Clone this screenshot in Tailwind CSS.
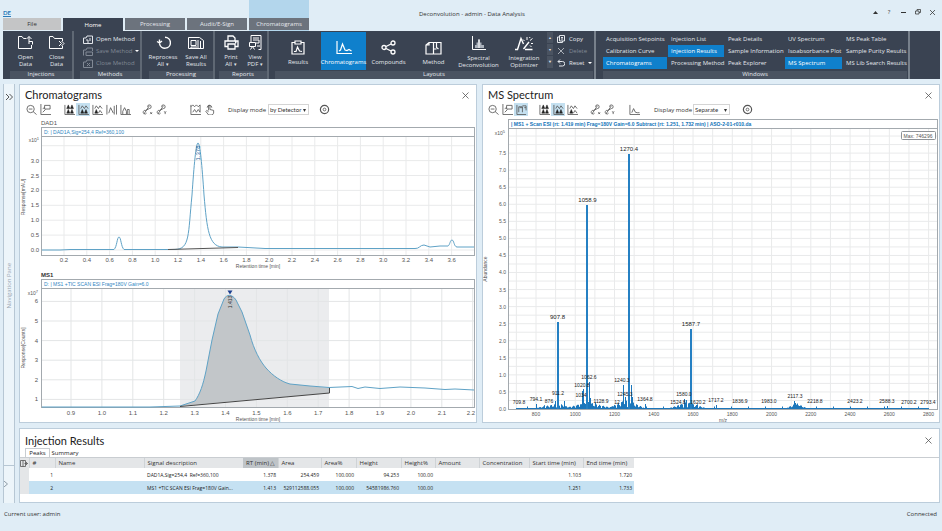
<!DOCTYPE html>
<html lang="en">
<head>
    <meta charset="UTF-8">
    <title>Deconvolution - admin - Data Analysis</title>
    <script src="https://cdn.jsdelivr.net/npm/@tailwindcss/browser@4"></script>
</head>
<body class="min-h-screen flex flex-col bg-[#e0edf6] text-[6px] leading-[6px] text-[#333] font-['Open_Sans',sans-serif]">

<header class="pl-[3px] pr-[2px]">
    <div class="flex h-[31px] items-stretch">
        <div class="flex flex-col justify-end">
            <div class="w-[8px] mb-[1px] border-b border-[#2a7ab8] text-[6px] leading-[6px] font-bold text-[#2a7ab8] font-['Lato',sans-serif]">DE</div>
            <nav class="flex gap-[2px] h-[13px] text-[#e6e9ee]">
                <a href="#" class="w-[58px] h-[12px] flex items-center justify-center bg-[#c4c5c6] text-[#333]">File</a>
                <a href="#" class="w-[60px] flex items-center justify-center bg-[#3a4352] text-white">Home</a>
                <a href="#" class="w-[60px] h-[12px] flex items-center justify-center bg-[#6c737d]">Processing</a>
                <a href="#" class="w-[60px] h-[12px] flex items-center justify-center bg-[#6c737d]">Audit/E-Sign</a>
            </nav>
        </div>
        <div class="ml-[2px] w-[60px] bg-[#b3d6ec] flex flex-col justify-end">
            <a href="#" class="h-[12px] mb-[1px] flex items-center justify-center bg-[#6c737d] text-[#e6e9ee]">Chromatograms</a>
        </div>
        <h1 class="flex-1 pl-[110px] pt-[11px] text-[6px] leading-[6px]">Deconvolution - admin - Data Analysis</h1>
        <div class="flex pt-[6px] pr-[1px] text-[#333]">
            <button class="w-[14px] h-[12px] flex items-center justify-center" aria-label="Collapse ribbon"><svg class="w-[5px] h-[3px]" viewBox="0 0 5 3"><path d="M0 3L2.5 0L5 3z" fill="#333"/></svg></button>
            <button class="w-[14px] h-[12px] flex items-center justify-center" aria-label="Help">?</button>
            <button class="w-[14px] h-[12px] flex items-center justify-center" aria-label="Minimize"><svg class="w-[5px] h-[5px]" viewBox="0 0 5 5" stroke="#333"><path d="M0 2.5h5"/></svg></button>
            <button class="w-[15px] h-[12px] flex items-center justify-center" aria-label="Restore"><svg class="w-[6px] h-[6px]" viewBox="0 0 12 12" fill="none" stroke="#333" stroke-width="1.5"><path d="M1 4h7v6H1zM4 4V1h7v6H8"/></svg></button>
            <button class="w-[14px] h-[12px] flex items-center justify-center" aria-label="Close"><svg class="w-[5px] h-[5px]" viewBox="0 0 10 10" stroke="#333" stroke-width="1.5"><path d="M0 0l10 10M10 0L0 10"/></svg></button>
        </div>
    </div>

    <div class="flex h-[48px] bg-[#3a4352] text-[#e3e7ec]">
        <section class="w-[71px] shrink-0 flex flex-col border-r-2 border-[#5f6874]">
            <div class="flex-1 flex justify-center pl-[7px]">
                <button class="w-[31px] flex flex-col items-center pt-[4px] gap-[4px] leading-[7px]">
                    <svg class="w-[17px] h-[15px]" viewBox="0 0 17 15" fill="none" stroke="#fff"><path d="M9 3.5H6.5L5 1.5H1.5v12h13V10M12 9V1.5M9.5 4L12 1.5 14.5 4M12 6.5h3.5v3"/></svg>
                    <span>Open<br>Data</span>
                </button>
                <button class="w-[31px] flex flex-col items-center pt-[4px] gap-[4px] leading-[7px]">
                    <svg class="w-[17px] h-[15px]" viewBox="0 0 17 15" fill="none" stroke="#fff"><path d="M14.5 6V3.5H6.5L5 1.5H1.5v12h13V11M11 6l2.5 2.5L11 11M13.5 6L16 8.5 13.5 11"/></svg>
                    <span>Close<br>Data</span>
                </button>
            </div>
            <h2 class="ml-[7px] h-[8px] pb-[1px] bg-[#4a5361] text-center leading-[7px]">Injections</h2>
        </section>
        <section class="w-[68px] shrink-0 flex flex-col border-r-2 border-[#5f6874] whitespace-nowrap">
            <div class="flex-1 flex flex-col pl-[9px] pt-[2px]">
                <button class="h-[12px] flex items-center gap-[3px]"><svg class="w-[10px] h-[9px]" viewBox="0 0 10 9" fill="none" stroke="#e3e7ec"><path d="M.5 8.5V3H3l1-2h5.5v7.5zM3 5h2v3M7 3v3"/></svg>Open Method</button>
                <button class="h-[12px] flex items-center gap-[3px] text-[#818995]"><svg class="w-[10px] h-[9px]" viewBox="0 0 10 9" fill="none" stroke="#818995"><path d="M.5 8.5V3H3l1-2h5.5v3M3 5h6.5v3.5H3z"/></svg>Save Method<svg class="w-[4px] h-[2px]" viewBox="0 0 4 2"><path d="M0 0h4L2 2z" fill="#fff"/></svg></button>
                <button class="h-[12px] flex items-center gap-[3px] text-[#818995]"><svg class="w-[10px] h-[9px]" viewBox="0 0 10 9" fill="none" stroke="#818995"><path d="M.5 8.5V3H3l1-2h5.5v7.5zM4 4l3 3M7 4L4 7"/></svg>Close Method</button>
            </div>
            <h2 class="ml-[6px] h-[8px] pb-[1px] bg-[#4a5361] text-center leading-[7px]">Methods</h2>
        </section>
        <section class="w-[73px] shrink-0 flex flex-col border-r-2 border-[#5f6874]">
            <div class="flex-1 flex justify-center pl-[4px]">
                <button class="w-[33px] flex flex-col items-center pt-[4px] gap-[4px] leading-[7px]">
                    <svg class="w-[15px] h-[15px]" viewBox="0 0 15 15" fill="none" stroke="#fff" stroke-width="1.4"><path d="M3.5 4.5V8M3.5 8L1 6.5M3.5 8L6 6M9 2.2a5.5 5.5 0 1 1-5.5 6.5"/></svg>
                    <span>Reprocess<br>All <span class="text-[5px]">▾</span></span>
                </button>
                <button class="w-[33px] flex flex-col items-center pt-[4px] gap-[4px] leading-[7px]">
                    <svg class="w-[16px] h-[15px]" viewBox="0 0 16 15" fill="none" stroke="#fff"><path d="M.5 2.5h11l4 3v8h-15zM3 5.5h5v5H3zM10 5v6M12.5 6v7M3 13v-1h8"/></svg>
                    <span>Save All<br>Results</span>
                </button>
            </div>
            <h2 class="ml-[7px] h-[8px] pb-[1px] bg-[#4a5361] text-center leading-[7px]">Processing</h2>
        </section>
        <section class="w-[54px] shrink-0 flex flex-col border-r-2 border-[#5f6874]">
            <div class="flex-1 flex justify-center pl-[4px]">
                <button class="w-[24px] flex flex-col items-center pt-[4px] gap-[4px] leading-[7px]">
                    <svg class="w-[15px] h-[15px]" viewBox="0 0 15 15" fill="none" stroke="#fff" stroke-width="1.3"><path d="M4 6V1h5l2 2v3M3.5 11.5H1V6h13v5.5h-2.5M4 9h7v5H4zM11 7.5h1.5"/></svg>
                    <span>Print<br>All <span class="text-[5px]">▾</span></span>
                </button>
                <button class="w-[24px] flex flex-col items-center pt-[4px] gap-[4px] leading-[7px]">
                    <svg class="w-[13px] h-[15px]" viewBox="0 0 13 15" fill="none" stroke="#fff"><path d="M2 7V.5h10v14H9.5M4 3h6M4 5h6v3H7M.5 7.5h6v4h-6zM1.5 14.5l2-3 2 3M8 11h3"/></svg>
                    <span>View<br>PDF <span class="text-[5px]">▾</span></span>
                </button>
            </div>
            <h2 class="ml-[4px] h-[8px] pb-[1px] bg-[#4a5361] text-center leading-[7px]">Reports</h2>
        </section>
        <section class="w-[327px] shrink-0 flex flex-col border-r-2 border-[#77808b]">
            <div class="flex-1 flex pl-[6px] pt-[1px]">
                <button class="w-[46px] shrink-0 h-[38px] flex flex-col items-center pt-[8px] gap-[4px]">
                    <svg class="w-[14px] h-[15px]" viewBox="0 0 14 15" fill="none" stroke="#fff" stroke-width="1.2"><path d="M4 2.5H1v11.5h12V2.5h-3M4 1h6v3H4zM3 11.5h2L6.5 7 8.5 11l2.5.5"/></svg>
                    <span>Results</span>
                </button>
                <button class="w-[45px] shrink-0 h-[38px] flex flex-col items-center pt-[8px] gap-[4px] bg-[#0f80cc] text-white">
                    <svg class="w-[16px] h-[15px]" viewBox="0 0 16 15" fill="none" stroke="#fff" stroke-width="1.2"><path d="M1 1v12.5h15M3 11l1.5-1L6.5 4 9 10l2 .5 2-1 2.5 1.5"/></svg>
                    <span>Chromatograms</span>
                </button>
                <button class="w-[45px] shrink-0 h-[38px] flex flex-col items-center pt-[8px] gap-[4px]">
                    <svg class="w-[15px] h-[15px]" viewBox="0 0 15 15" fill="none" stroke="#fff" stroke-width="1.3"><circle cx="3" cy="7.5" r="2"/><circle cx="12" cy="3" r="2"/><circle cx="12" cy="12" r="2"/><path d="M5 6.5L10 4M5 8.5L10 11"/></svg>
                    <span>Compounds</span>
                </button>
                <button class="w-[45px] shrink-0 h-[38px] flex flex-col items-center pt-[8px] gap-[4px]">
                    <svg class="w-[17px] h-[15px]" viewBox="0 0 17 15" fill="none" stroke="#fff" stroke-width="1.2"><path d="M8.5 14H1V5l3-2.5h4.5zM4 2.5V5H1M8.5 2.5H16V14H8.5zM11.5 2.5v5l2 1.5M8.5 9h3"/></svg>
                    <span>Method</span>
                </button>
                <button class="w-[45px] shrink-0 h-[38px] flex flex-col items-center pt-[4px] gap-[4px] leading-[7px]">
                    <svg class="w-[15px] h-[15px]" viewBox="0 0 15 15" fill="none" stroke="#fff"><path d="M1.5 0v13.5H15"/><path d="M4 12V9h1.5V6.5H7V4h2v2.5h1.5V9H13v3z" fill="#aab1bb" stroke="none"/><path d="M8 3v9"/></svg>
                    <span>Spectral<br>Deconvolution</span>
                </button>
                <button class="w-[46px] shrink-0 h-[38px] flex flex-col items-center pt-[4px] gap-[4px] leading-[7px]">
                    <svg class="w-[18px] h-[15px]" viewBox="0 0 18 15" fill="none" stroke="#fff"><path d="M0 13.5h2.5L6 2.5 8.5 8M10 13.5h7.5M8.5 13L14 6" stroke-width="1.4"/><path d="M15 4.5l2.5-2M12 4V1M9.5 5L8 3.5M16 7.5h2M15 9.5l1.5 1.5M14.5 2l.5-1"/></svg>
                    <span>Integration<br>Optimizer</span>
                </button>
                <div class="w-[6px] flex flex-col gap-[1px] text-[4px]">
                    <button class="h-[11px] bg-[#4a5361]">▴</button>
                    <button class="h-[11px] bg-[#4a5361]">▾</button>
                    <button class="h-[12px] bg-[#4a5361]">▼</button>
                </div>
                <div class="flex flex-col pl-[4px] pt-[1px]">
                    <button class="h-[12px] flex items-center gap-[4px]"><svg class="w-[8px] h-[8px]" viewBox="0 0 8 8" fill="none" stroke="#e3e7ec"><path d="M2.5.5h5v5.5h-5zM2.5 2h-2v5.5h5V6M4 2.5h2M4 4h2"/></svg>Copy</button>
                    <button class="h-[12px] flex items-center gap-[4px] text-[#818995]"><svg class="w-[8px] h-[8px]" viewBox="0 0 8 8" stroke="#aab0b8"><path d="M1 1l6 6M7 1L1 7"/></svg>Delete</button>
                    <button class="h-[12px] flex items-center gap-[4px]"><svg class="w-[8px] h-[8px]" viewBox="0 0 8 8" fill="none" stroke="#e3e7ec"><path d="M3 .5L1 2.5l2 2M1 2.5h4.5a2 2 0 0 1 0 4.5H2"/></svg>Reset<svg class="w-[4px] h-[2px]" viewBox="0 0 4 2"><path d="M0 0h4L2 2z" fill="#fff"/></svg></button>
                </div>
            </div>
            <h2 class="ml-[6px] mr-[1px] h-[8px] pb-[1px] bg-[#4a5361] text-center leading-[7px]">Layouts</h2>
        </section>
        <section class="w-[314px] shrink-0 flex flex-col border-r-2 border-[#77808b]">
            <div class="flex-1 grid grid-rows-3 grid-flow-col grid-cols-[65px_57px_60px_58px_62px] pl-[7px] pt-[2px] pb-[2px] whitespace-nowrap" id="window-list"></div>
            <h2 class="ml-[7px] mr-[1px] h-[8px] pb-[1px] bg-[#4a5361] text-center leading-[7px]">Windows</h2>
        </section>
    </div>
</header>

<main class="flex-1 flex gap-[4px] pl-[3px] pr-[2px] pt-[5px]">
    <aside class="w-[12px] flex flex-col items-center justify-between border-x border-[#b7c7d4] bg-[#edf5fa]">
        <button class="pt-[9px]" aria-label="Expand navigation pane"><svg class="w-[8px] h-[8px]" viewBox="0 0 8 8" fill="none" stroke="#555"><path d="M1 1l3 3-3 3M4.5 1l3 3-3 3"/></svg></button>
        <span class="[writing-mode:vertical-rl] rotate-180 pb-[5px] text-[#9aa8b4]">Navigation Pane</span>
        <div class="w-full h-[38px] flex items-center border-t border-[#b7c7d4]"><svg class="w-[4px] h-[6px]" viewBox="0 0 4 6" fill="none" stroke="#8c9aa6"><path d="M0 0l3.5 3L0 6"/></svg></div>
    </aside>

    <div class="flex-1 min-w-0 flex flex-col gap-[5px]">
        <div class="flex gap-[5px]">
            <section class="flex-1 min-w-0 bg-white border border-[#bccddb]">
                <div class="flex justify-between items-center h-[18px] pl-[5px] pr-[7px] pt-[2px]">
                    <h2 class="text-[11px] leading-[14px] text-[#222] font-['Lato',sans-serif]">Chromatograms</h2>
                    <button aria-label="Close Chromatograms"><svg class="w-[7px] h-[7px]" viewBox="0 0 7 7" stroke="#555" stroke-width=".8"><path d="M.5.5l6 6M6.5.5l-6 6"/></svg></button>
                </div>
                <div class="flex items-center h-[13px] pl-[4px]">
                    <div class="flex" data-icons="zoom,axes"></div>
                    <div class="flex ml-[10px]" data-icons="stack,overlay*,merge,peaks,hist"></div>
                    <div class="flex ml-[8px]" data-icons="scaleX,scaleY"></div>
                    <div class="flex ml-[20px]" data-icons="range,hand"></div>
                    <label for="mode-chrom" class="ml-[12px] w-[40px] whitespace-nowrap">Display mode</label>
                    <span class="relative">
                        <select id="mode-chrom" class="appearance-none w-[41px] h-[11px] pl-[1px] border border-[#d4d4d4] bg-white text-[6px] leading-[8px] font-['Lato',sans-serif]"><option>by Detector</option></select>
                        <svg class="absolute right-[3px] top-[5px] w-[3px] h-[3px]" viewBox="0 0 3 3"><path d="M0 0h3L1.5 3z" fill="#333"/></svg>
                    </span>
                    <div class="flex ml-[8px]" data-icons="gear"></div>
                </div>
                <svg id="dad" class="block w-full h-auto" viewBox="20 116 456 153"></svg>
                <svg id="tic" class="block w-full h-auto" viewBox="20 269 456 153"></svg>
            </section>

            <section class="flex-1 min-w-0 bg-white border border-[#bccddb]">
                <div class="flex justify-between items-center h-[18px] pl-[5px] pr-[7px] pt-[2px]">
                    <h2 class="text-[11px] leading-[14px] text-[#222] font-['Lato',sans-serif]">MS Spectrum</h2>
                    <button aria-label="Close MS Spectrum"><svg class="w-[7px] h-[7px]" viewBox="0 0 7 7" stroke="#555" stroke-width=".8"><path d="M.5.5l6 6M6.5.5l-6 6"/></svg></button>
                </div>
                <div class="flex items-center h-[13px] pl-[3px]">
                    <div class="flex" data-icons="zoom,axes,copyaxes*"></div>
                    <div class="flex ml-[9px]" data-icons="stack,overlay*,merge"></div>
                    <div class="flex ml-[9px]" data-icons="scaleX,scaleY"></div>
                    <div class="flex ml-[11px]" data-icons="trace"></div>
                    <label for="mode-ms" class="ml-[13px] w-[39px] whitespace-nowrap">Display mode</label>
                    <span class="relative">
                        <select id="mode-ms" class="appearance-none w-[37px] h-[11px] pl-[1px] border border-[#d4d4d4] bg-white text-[6px] leading-[8px] font-['Lato',sans-serif]"><option>Separate</option></select>
                        <svg class="absolute right-[3px] top-[5px] w-[3px] h-[3px]" viewBox="0 0 3 3"><path d="M0 0h3L1.5 3z" fill="#333"/></svg>
                    </span>
                    <div class="flex ml-[10px]" data-icons="gear"></div>
                </div>
                <svg id="spectrum" class="block w-full h-auto" viewBox="483 116 456 306"></svg>
            </section>
        </div>

        <section class="flex-1 bg-white border border-[#bccddb]">
            <div class="flex justify-between items-center h-[19px] pl-[5px] pr-[7px] pt-[4px]">
                <h2 class="text-[11px] leading-[14px] text-[#222] font-['Lato',sans-serif]">Injection Results</h2>
                <button aria-label="Close Injection Results"><svg class="w-[7px] h-[7px]" viewBox="0 0 7 7" stroke="#555" stroke-width=".8"><path d="M.5.5l6 6M6.5.5l-6 6"/></svg></button>
            </div>
            <div class="flex h-[10px] pl-[5px] border-b border-[#c9cdd1] text-[#222]">
                <button class="w-[25px] border-x border-t border-[#c9cdd1]">Peaks</button>
                <button class="w-[30px]">Summary</button>
            </div>
            <table class="table-fixed w-[614px] border-collapse">
                <colgroup><col class="w-[9px]"><col class="w-[26px]"><col class="w-[89px]"><col class="w-[99px]"><col class="w-[35px]"><col class="w-[43px]"><col class="w-[35px]"><col class="w-[45px]"><col class="w-[34px]"><col class="w-[44px]"><col class="w-[50px]"><col class="w-[54px]"><col class="w-[51px]"></colgroup>
                <thead id="peak-head"></thead>
                <tbody id="peak-rows" class="text-[5px] text-[#222]"></tbody>
            </table>
        </section>
    </div>
</main>

<footer class="h-[28px] flex justify-between pl-[4px] pr-[5px] pt-[8px]">
    <span>Current user: admin</span>
    <span>Connected</span>
</footer>

<script>
    // Ribbon: window list, filled column by column
    const windows = ['Acquisition Setpoints', 'Calibration Curve', 'Chromatograms*', 'Injection List', 'Injection Results*', 'Processing Method',
        'Peak Details', 'Sample Information', 'Peak Explorer', 'UV Spectrum', 'Isoabsorbance Plot', 'MS Spectrum*',
        'MS Peak Table', 'Sample Purity Results', 'MS Lib Search Results'];
    document.getElementById('window-list').innerHTML = windows.map(name => name.endsWith('*')
        ? `<button class="text-left px-[3px] mr-[1px] bg-[#0f80cc] text-white">${name.slice(0, -1)}</button>`
        : `<button class="text-left px-[3px] mr-[1px]">${name}</button>`).join('');

    // Toolbar icons
    const icons = {
        zoom: '<circle cx="5" cy="5.5" r="4"/><path d="M3 5.5h4M8 8.5l3.5 3"/>',
        axes: '<path d="M1 0v11.5h11M5 1.5h6v4H5zM3 9l3-3M5 4L3 5"/>',
        copyaxes: '<path d="M1 1v10.5h10M3 9V3h4v6M7 2h4v5M4 4h3M9 4h2"/>',
        stack: '<path d="M1 1v10.5h11"/><path d="M3 5l1.7-4 1.6 4zM7 5l1.7-4 1.6 4zM3 10l1.7-4 1.6 4zM7 10l1.7-4 1.6 4z" fill="#222" stroke="#222" stroke-width=".6"/>',
        overlay: '<path d="M1 1v10.5h11M3 5l1.7-3L7 5l1.7-3L11 5"/><path d="M3 10l1.7-4 1.6 4zM7 10l1.7-4 1.6 4z" fill="#222" stroke="#222" stroke-width=".6"/>',
        merge: '<path d="M1 1v10.5h11M3 5l1.7-3L7 5l1.7-3L11 5M7 10l1.7-3L11 10"/><path d="M3 10l1.7-4 1.6 4z" fill="#222" stroke="#222" stroke-width=".6"/>',
        peaks: '<path d="M1 1v10.5M3 10l2-6 3 6M9 2v9.5M11.5 1v10.5"/>',
        hist: '<path d="M1 1v10.5h11M3 11V8l2-4 2 4v3M8 11V6h2v5"/>',
        scaleX: '<path d="M2 11l6-9M6 3a2 2 0 1 1 2 2L4 7a2 2 0 1 0 1 3M9 9l2 2M11 9l-2 2"/>',
        scaleY: '<path d="M2 11l6-9M6 3a2 2 0 1 1 2 2L4 7a2 2 0 1 0 1 3M9 8l1 1.5L11 8M10 9.5V11"/>',
        range: '<path d="M1 1v10.5h11M1 3l2-2 2 2 2-2 2 2 2-2M3 9l2-3 2 3 2-3 2 3M11 1v8"/>',
        hand: '<path d="M5 7V1.5h1.5V6l4 1v3L9 12H5L2 8l1-1 2 1.5M3.5 4a2.5 2.5 0 1 1 5 0"/>',
        trace: '<path d="M1 1v10.5h11M3 9.5L5 5l2 4 2 .5h2.5"/>',
        gear: '<circle cx="6" cy="6" r="4.5" stroke-width="1.3"/><circle cx="6" cy="6" r="1.5"/>'
    };
    document.querySelectorAll('[data-icons]').forEach(box => {
        box.innerHTML = box.dataset.icons.split(',').map(key => {
            const name = key.replace('*', '');
            const drawing = `<svg class="w-[11px] h-[11px]" viewBox="0 0 12 12" fill="none" stroke="#555" stroke-width=".9">${icons[name]}</svg>`;
            return key.endsWith('*')
                ? `<button aria-label="${name}" class="w-[14px] h-[13px] flex items-center justify-center bg-[#c4e0f0]">${drawing}</button>`
                : `<button aria-label="${name}" class="w-[14px] h-[13px] flex items-center justify-center">${drawing}</button>`;
        }).join('');
    });

    // Peak table
    const columns = ['', '#', 'Name', 'Signal description', 'RT (min) △', 'Area', 'Area%', 'Height', 'Height%', 'Amount', 'Concentration', 'Start time (min)', 'End time (min)'];
    const peaks = [
        ['', '1', '', 'DAD1A,Sig=254,4&nbsp; Ref=360,100', '1.378', '254.459', '100.000', '94.253', '100.00', '', '', '1.103', '1.720'],
        ['', '2', '', 'MS1 +TIC SCAN ESI Frag=180V Gain...', '1.413', '529112588.055', '100.000', '54581986.760', '100.00', '', '', '1.251', '1.733']
    ];
    document.getElementById('peak-head').innerHTML = '<tr class="h-[10px] bg-[#e4e6e8]">' + columns.map((c, i) => {
        if (i === 0) return '<th aria-label="Columns" class="p-0"><svg class="w-[8px] h-[7px]" viewBox="0 0 8 7" fill="none" stroke="#555" stroke-width=".8"><path d="M.5.5h5v6h-5zM3 .5v6M4.5 3.5h3M6 2l1.5 1.5L6 5"/></svg></th>';
        return i === 4
            ? `<th class="p-0 pr-[2px] text-right font-normal bg-[#bfc4c8] whitespace-nowrap">${c}</th>`
            : `<th class="p-0 pl-[3px] text-left font-normal border-l border-[#cfd3d6] whitespace-nowrap">${c}</th>`;
    }).join('') + '</tr>';
    document.getElementById('peak-rows').innerHTML = peaks.map((row, r) =>
        (r ? '<tr class="h-[13px] bg-[#c5e1f2]">' : '<tr class="h-[13px]">') + row.map((v, i) => {
            if (i === 0) return '<td class="p-0 bg-[#e4e6e8]"></td>';
            return i === 3
                ? `<td class="p-0 pl-[3px] whitespace-nowrap">${v}</td>`
                : `<td class="p-0 pr-[2px] text-right">${v}</td>`;
        }).join('') + '</tr>').join('');

    // Charts
    const font = 'Liberation Sans, sans-serif';
    const text = (x, y, s, extra = '') => `<text x="${x}" y="${y}" font-family="${font}" font-size="6" fill="#555" text-anchor="middle" ${extra}>${s}</text>`;
    const line = (x1, y1, x2, y2, color, w = 1) => `<line x1="${x1}" y1="${y1}" x2="${x2}" y2="${y2}" stroke="${color}" stroke-width="${w}"/>`;
    const frame = (x1, top, head, x2, bottom) =>
        `<rect x="${x1}" y="${top}" width="${x2 - x1}" height="${bottom - top}" fill="none" stroke="#a3a9ae"/>` + line(x1, head, x2, head, '#a3a9ae');
    const grid = '#e9eaeb';

    // DAD1
    let svg = '';
    for (let i = 0; i < 18; i++) {
        const x = 64 + i * 22.8;
        svg += line(x, 136, x, 255, grid) + text(x, 262, (0.2 + i * 0.2).toFixed(1));
    }
    for (let i = 0; i < 8; i++) svg += line(42, 250 - i * 14.9, 474, 250 - i * 14.9, grid);
    for (let i = 0; i < 7; i++) svg += text(39, 252 - i * 14.9, (i * 0.5).toFixed(1), 'style="text-anchor:end"');
    svg += frame(41.5, 127.5, 136.5, 474.5, 255.5);
    svg += text(41, 125, 'DAD1', 'style="text-anchor:start"') + text(44, 134, 'D: | DAD1A,Sig=254,4 Ref=360,100', 'style="text-anchor:start;fill:#2f86bf;font-size:5px"');
    svg += text(39, 142, 'x10<tspan dy="-2" font-size="4">1</tspan>', 'style="text-anchor:end;font-size:5px"');
    svg += text(258, 268, 'Retention time [min]', 'style="font-size:5px"') + text(25, 197, 'Response[mAU]', 'transform="rotate(-90 25 197)" style="font-size:5px"');
    svg += '<path d="M42 250H60L70 249.5H96L114 249.5C117 247 117 237 119 237S121 247 124 249.5H175C190 249 188 235 192 195C194 165 196 143 198 143S202 165 204 195C207 230 209 246 222 247H238L265 248.5H415C419 249 420 245 424 245L430 247 440 246H448C450 245 450 240 452 240S454 247 457 247H474" fill="none" stroke="#5fa2c6"/>';
    svg += '<path d="M168 249.5L238 247.5" stroke="#555"/>' + text(200, 153, '1.378', 'transform="rotate(-90 200 153)" style="fill:#1d5f96"');
    document.getElementById('dad').innerHTML = svg;

    // MS1 total ion chromatogram
    svg = '<rect x="180" y="289" width="149" height="118" fill="#ebecee"/>';
    for (let i = 0; i < 14; i++) {
        const x = 71 + i * 30.9;
        svg += line(x, 289, x, 407, '#e3e5e6') + text(Math.min(x, 471), 415, (0.9 + i * 0.1).toFixed(1));
    }
    for (let i = 1; i < 7; i++) svg += line(42, 419 - i * 19.6, 474, 419 - i * 19.6, '#e3e5e6') + text(38, 421 - i * 19.6, i, 'style="text-anchor:end"');
    svg += '<path d="M180 406L195 401C200 394 203 385 206 371L212 340 218 314 224 299C227 294 232 294 236 300L242 312 250 335C254 350 260 361 266 368C273 376 282 382 290 384L310 386 329 388V393z" fill="#c2c6c9"/>';
    svg += frame(41.5, 279.5, 288.5, 474.5, 407.5);
    svg += text(41, 277, 'MS1', 'style="text-anchor:start;font-weight:bold;fill:#333"') + text(44, 286, 'D: | MS1 +TIC SCAN ESI Frag=180V Gain=6.0', 'style="text-anchor:start;fill:#2f86bf;font-size:5px"');
    svg += text(38, 295, 'x10<tspan dy="-2" font-size="4">7</tspan>', 'style="text-anchor:end;font-size:5px"');
    svg += text(258, 421, 'Retention time [min]', 'style="font-size:5px"') + text(25, 348, 'Response[Counts]', 'transform="rotate(-90 25 348)" style="font-size:5px"');
    svg += '<path d="M42 407H150L180 406L195 401C200 394 203 385 206 371L212 340 218 314 224 299C227 294 232 294 236 300L242 312 250 335C254 350 260 361 266 368C273 376 282 382 290 384L310 386 329 387.5L352 386.5 358 388.5 365 387 380 388.5 400 387 425 388 445 389.5 455 389 474 390" fill="none" stroke="#5fa2c6"/>';
    svg += '<path d="M180 406.5L329.5 393V388" fill="none" stroke="#444"/><path d="M227.5 290.5h5l-2.5 4z" fill="#1c3f8f"/>' + text(232, 302, '1.413', 'transform="rotate(-90 232 302)" style="fill:#333;font-size:5px"');
    document.getElementById('tic').innerHTML = svg;

    // Mass spectrum
    const mz = v => 536 + (v - 800) * 0.1963;
    svg = '';
    for (let v = 700; v <= 2800; v += 100) {
        svg += line(mz(v), 129, mz(v), 409, grid);
        if (v % 200 === 0) svg += text(mz(v), 416, v, 'style="font-size:5px"');
    }
    for (let i = 1; i < 33; i++) svg += line(509, 409 - i * 8.53, 937, 409 - i * 8.53, grid);
    for (let i = 0; i < 16; i++) svg += text(506, 411 - i * 17.07, (i * 0.5).toFixed(1), 'style="text-anchor:end;font-size:5px"');
    svg += frame(508.5, 119.5, 128.5, 937.5, 409.5);
    svg += text(511, 126, '| MS1 + Scan ESI (rt: 1.419 min) Frag=180V Gain=6.0 Subtract (rt: 1.251, 1.732 min) | ASO-2-01-r010.da', 'style="text-anchor:start;fill:#1173b8;font-weight:bold;font-size:5px"');
    svg += text(505, 135, 'x10<tspan dy="-2" font-size="4">5</tspan>', 'style="text-anchor:end;font-size:5px"');
    svg += text(723, 422, 'm/z', 'style="font-size:5px"') + text(487, 269, 'Abundance', 'transform="rotate(-90 487 269)" style="font-size:5px"');
    // low background signal along the baseline
    let noise = '';
    for (let x = 516; x < 929; x++) {
        const near = Math.max(0, 6 - Math.abs(x - 588) / 4, 9 - Math.abs(x - 626) / 2, 4 - Math.abs(x - 555) / 5, 6 - Math.abs(x - 687) / 3, 5 - Math.abs(x - 796) / 2);
        noise += `M${x + 0.5} 409v-${(1 + near * Math.abs(Math.sin(x * 2.3)) + (x % 17 === 0 ? 1.5 : 0)).toFixed(1)}`;
    }
    svg += `<path d="${noise}" stroke="#1b76bb"/>`;
    [[558, 322], [587, 205], [629, 154], [691, 329]].forEach(p => svg += line(p[0], 409, p[0], p[1], '#2580c3', 2));
    [[536, 404], [564, 401], [555, 401], [582, 391], [583, 389], [590, 398], [589, 382], [623, 385], [625, 397], [631, 385], [632, 397], [645, 404], [684, 399], [686, 400], [794, 401], [795, 403], [716, 405], [887, 406]].forEach(p => svg += line(p[0] + 0.5, 409, p[0] + 0.5, p[1], '#1b76bb'));
    [[557.5, 319, '907.8'], [587.5, 202, '1058.9'], [629, 151, '1270.4'], [691, 326, '1587.7'], [519, 404, '709.8'], [536, 401, '794.1'], [549, 403, '876'], [558, 395, '911.2'],
        [582, 387, '1020.8'], [581, 397, '1034'], [589, 379, '1062.6'], [601, 403, '1128.9'], [622, 382, '1240.3'], [625, 396, '1245.3'], [617, 404, '12'], [645, 401, '1364.8'],
        [684, 396, '1580.0'], [678, 404, '1524.8'], [698, 404, '1620.2'], [716, 402, '1717.2'], [740, 403, '1836.9'], [769, 403, '1983.0'], [795, 398, '2117.3'], [815, 403, '2218.8'],
        [855, 403, '2423.2'], [887, 403, '2588.3'], [909, 404, '2700.2'], [928, 404, '2793.4']
    ].forEach(p => svg += text(p[0], p[1], p[2], p[1] < 330 ? 'style="fill:#222"' : 'style="fill:#222;font-size:5px"'));
    svg += '<rect x="901.5" y="131.5" width="34" height="8" rx="1" fill="#fff" stroke="#8d9297"/>' + text(918, 138, 'Max: 746296', 'style="font-size:5px"');
    document.getElementById('spectrum').innerHTML = svg;
</script>
</body>
</html>
